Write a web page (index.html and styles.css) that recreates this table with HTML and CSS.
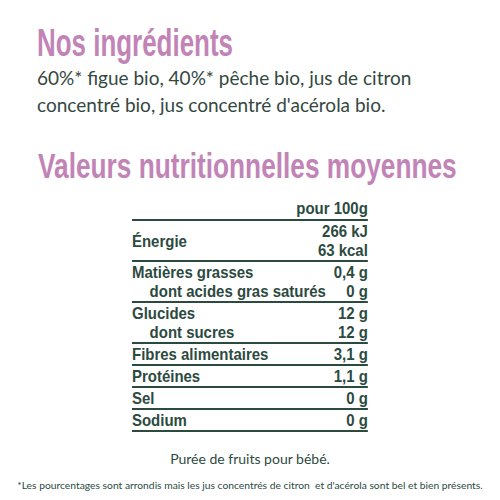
FILE: index.html
```html
<!DOCTYPE html>
<html>

<head>
  <title>Nos ingrédients</title>
  <link rel="stylesheet" href="styles.css">
</head>

<body>
  <div class="page">
    <!-- Ingredients -->
    <div class="ingredients">
      <h2 class="title small">Nos ingrédients</h2>
      <p class="ing-text">60%* figue bio, 40%* pêche bio, jus de citron<br>concentré bio, jus concentré d'acérola bio.</p>
    </div>

    <!-- Nutrition -->
    <div class="nutrition">
      <h2 class="title big">Valeurs nutritionnelles moyennes</h2>
      <table class="nut-table">
        <colgroup>
          <col class="col-label">
          <col class="col-val">
        </colgroup>
        <thead>
          <tr>
            <th colspan="2" class="val">pour 100g</th>
          </tr>
        </thead>
        <tbody>
          <tr>
            <td>Énergie</td>
            <td class="val">266 kJ<br>63 kcal</td>
          </tr>
          <tr>
            <td>Matières grasses<br><span class="sub">dont acides gras saturés</span></td>
            <td class="val">0,4 g<br>0 g</td>
          </tr>
          <tr>
            <td>Glucides<br><span class="sub">dont sucres</span></td>
            <td class="val">12 g<br>12 g</td>
          </tr>
          <tr>
            <td>Fibres alimentaires</td>
            <td class="val">3,1 g</td>
          </tr>
          <tr>
            <td>Protéines</td>
            <td class="val">1,1 g</td>
          </tr>
          <tr>
            <td>Sel</td>
            <td class="val">0 g</td>
          </tr>
          <tr>
            <td>Sodium</td>
            <td class="val">0 g</td>
          </tr>
        </tbody>
      </table>
    </div>

    <p class="caption">Purée de fruits pour bébé.</p>
    <p class="note">*Les pourcentages sont arrondis mais les jus concentrés de citron &nbsp;et d'acérola sont bel et bien présents.</p>
  </div>
</body>

</html>
```

FILE: styles.css
```css
* {
  margin: 0;
  padding: 0;
  box-sizing: border-box;
}

body {
  background-color: white;
  color: #2d4a3f;
  font-family: Lato, "Open Sans", sans-serif;
}

.page {
  width: 500px;
  height: 500px;
  padding-top: 23px;
  overflow: hidden;
}

/* Headings (condensed look) */
.title {
  font-family: "Liberation Sans", Arial, sans-serif;
  font-weight: bold;
  color: #c284b7;
  white-space: nowrap;
  transform-origin: left top;
}

.small {
  font-size: 39px;
  line-height: 39px;
  transform: scaleX(0.665);
}

.big {
  font-size: 35px;
  line-height: 35px;
  transform: scaleX(0.75);
}

.ingredients {
  padding: 0 37px;
}

.ing-text {
  font-size: 19px;
  line-height: 27px;
  color: #34483f;
  margin-top: 2px;
  white-space: nowrap;
}

.nutrition {
  margin-top: 30px;
  padding: 0 38px;
}

/* Table (condensed look) */
.nut-table {
  width: 268px;
  table-layout: fixed;
  margin: 15px 0 0 94px;
  border-collapse: collapse;
  font-family: "Liberation Sans", Arial, sans-serif;
  font-weight: bold;
  font-size: 17px;
  line-height: 19px;
  color: #2d4a3f;
  transform: scaleX(0.88);
  transform-origin: left top;
}

.col-label {
  width: 200px;
}

.col-val {
  width: 68px;
}

.nut-table th,
.nut-table td {
  border-bottom: 2px solid #2d4a3f;
  text-align: left;
  padding: 1px 0 0;
  vertical-align: middle;
  white-space: nowrap;
}

.nut-table th {
  padding-bottom: 1px;
}

.nut-table .val {
  text-align: right;
}

.sub {
  padding-left: 20px;
}

.caption {
  text-align: center;
  font-size: 14px;
  line-height: 16px;
  margin-top: 19px;
}

.note {
  text-align: center;
  font-size: 10.3px;
  line-height: 12px;
  margin-top: 12px;
  white-space: nowrap;
}
```
